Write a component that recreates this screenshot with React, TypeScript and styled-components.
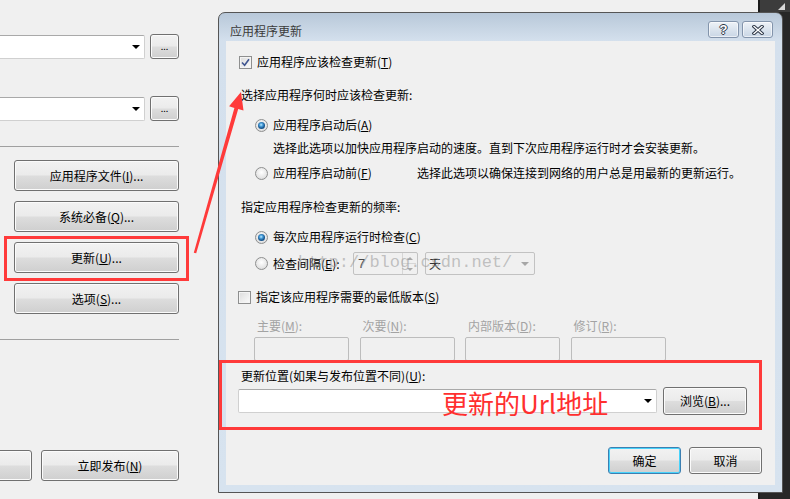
import React from 'react';
import styled, { createGlobalStyle } from 'styled-components';

const GlobalStyle = createGlobalStyle`
  html, body {
    margin: 0;
    padding: 0;
    background: #f0f0f0;
  }
  body {
    font-family: 'Noto Sans CJK SC', 'Noto Sans', 'Liberation Sans', sans-serif;
    font-size: 12px;
    color: #000;
  }
`;

const Screen = styled.div`
  position: relative;
  width: 790px;
  height: 499px;
  display: flex;
  overflow: hidden;
  background: #f0f0f0;
`;

// main window behind the dialog
const MainWindow = styled.div`
  width: 758px;
  flex: none;
  padding-top: 34px;
  box-sizing: border-box;
`;

const SideColumn = styled.div`
  width: 179px;
  display: flex;
  flex-direction: column;
`;

const PathRow = styled.div<{ $top: number }>`
  display: flex;
  align-items: center;
  gap: 5px;
  height: 25px;
  margin-top: ${(p) => p.$top}px;
`;

const Combo = styled.div<{ $w: number; $h?: number; $shift?: number }>`
  width: ${(p) => p.$w}px;
  height: ${(p) => p.$h ?? 24}px;
  margin-left: ${(p) => p.$shift ?? 0}px;
  box-sizing: border-box;
  background: #fff;
  border: 1px solid #d0d0d0;
  border-top-color: #a9a9a9;
  border-radius: 2px;
  display: flex;
  align-items: center;
  justify-content: flex-end;
  padding-right: 4px;
  flex: none;
`;

const DropArrow = styled.span<{ $disabled?: boolean }>`
  width: 0;
  height: 0;
  border-left: 4px solid transparent;
  border-right: 4px solid transparent;
  border-top: 4px solid ${(p) => (p.$disabled ? '#a6a6a6' : '#000')};
`;

const WinButton = styled.div<{ $w: number; $h: number; $default?: boolean }>`
  width: ${(p) => p.$w}px;
  height: ${(p) => p.$h}px;
  flex: none;
  box-sizing: border-box;
  border: 1px solid ${(p) => (p.$default ? '#3c7fb1' : '#707070')};
  border-radius: 3px;
  background: linear-gradient(#f2f2f2 0%, #ebebeb 48%, #dddddd 52%, #cfcfcf 100%);
  box-shadow: inset 0 0 0 1px ${(p) => (p.$default ? '#48d3fb' : '#fbfbfb')};
  display: flex;
  align-items: center;
  justify-content: center;
  font-size: 12px;
  line-height: 16px;
  color: #000;
  white-space: nowrap;
`;

const Dots = styled(WinButton)`
  font-size: 9px;
  letter-spacing: 0;
  padding-top: 1px;
`;

const SideButton = styled(WinButton)<{ $top: number }>`
  margin-left: 14px;
  margin-top: ${(p) => p.$top}px;
`;

const Separator = styled.div<{ $top: number }>`
  height: 1px;
  background: #a0a0a0;
  margin-top: ${(p) => p.$top}px;
`;

const BottomRow = styled.div`
  display: flex;
  gap: 9px;
  margin-top: 110px;
  margin-left: -10px;
`;

const DarkStrip = styled.div`
  flex: 1;
  background: #272727;
  border-left: 2px solid #1b1b1b;
`;

const StripCap = styled.div`
  height: 12px;
  background: #3c3c3c;
  display: flex;
  justify-content: flex-end;
  padding: 3px 5px 0 0;
  box-sizing: border-box;
`;

const Grip = styled.span`
  width: 0;
  height: 0;
  border-left: 7px solid transparent;
  border-bottom: 7px solid #d8d8d8;
`;

// dialog
const Dialog = styled.div`
  position: absolute;
  left: 218px;
  top: 12px;
  width: 565px;
  height: 481px;
  box-sizing: border-box;
  border: 1px solid #555;
  border-radius: 7px 7px 0 0;
  background: linear-gradient(#b8c8d9 0px, #d4e0ed 28px, #d7e3ef 100%);
  display: flex;
  flex-direction: column;
`;

const TitleBar = styled.div`
  height: 28px;
  flex: none;
  display: flex;
  align-items: flex-start;
  padding: 8px 9px 0 11px;
  box-sizing: border-box;
`;

const Title = styled.div`
  flex: 1;
  margin-top: 2px;
  line-height: 16px;
  color: #3b3b3b;
`;

const CaptionButtons = styled.div`
  display: flex;
  gap: 3px;
`;

const CaptionButton = styled.div`
  width: 31px;
  height: 17px;
  box-sizing: border-box;
  border: 1px solid #8394ab;
  border-radius: 3px;
  background: linear-gradient(#eef2f7 0%, #dbe4ee 50%, #c9d6e5 100%);
  box-shadow: inset 0 0 0 1px rgba(255, 255, 255, 0.6);
  display: flex;
  align-items: center;
  justify-content: center;
`;

const HelpGlyph = styled.span`
  font-family: 'Liberation Sans', sans-serif;
  font-weight: bold;
  font-size: 13px;
  line-height: 13px;
  color: #fff;
  text-shadow: 1px 0 #2c3646, -1px 0 #2c3646, 0 1px #2c3646, 0 -1px #2c3646;
`;

const Client = styled.div`
  flex: 1;
  margin: 0 7px 7px;
  background: #f0f0f0;
  display: flex;
  flex-direction: column;
  padding-top: 12px;
  box-sizing: border-box;
`;

const Line = styled.div<{ $top: number; $indent: number; $h?: number }>`
  display: flex;
  align-items: center;
  height: ${(p) => p.$h ?? 18}px;
  margin-top: ${(p) => p.$top}px;
  padding-left: ${(p) => p.$indent}px;
  white-space: nowrap;
  line-height: 16px;
`;

const Label = styled.span<{ $w?: number; $gap?: number }>`
  margin-left: ${(p) => p.$gap ?? 5}px;
  ${(p) => (p.$w ? `width: ${p.$w}px;` : '')}
  flex: none;
`;

const CheckBox = styled.span`
  width: 13px;
  height: 13px;
  box-sizing: border-box;
  border: 1px solid #8e8f8f;
  background: linear-gradient(135deg, #dcdcdc, #fbfbfb);
  box-shadow: inset 0 0 0 1px #f4f4f4;
  display: flex;
  align-items: center;
  justify-content: center;
  flex: none;
`;

const Radio = styled.span<{ $checked?: boolean }>`
  width: 13px;
  height: 13px;
  box-sizing: border-box;
  border-radius: 50%;
  border: 1px solid #8e8f8f;
  background: radial-gradient(circle at 50% 40%, #ffffff 0, #e6e6e6 60%, #cfcfcf 100%);
  display: flex;
  align-items: center;
  justify-content: center;
  flex: none;
  &::after {
    content: '';
    display: ${(p) => (p.$checked ? 'block' : 'none')};
    width: 7px;
    height: 7px;
    border-radius: 50%;
    background: radial-gradient(circle at 45% 40%, #c4ecff 0, #4aa0dc 1.6px, #17548c 3.5px);
  }
`;

const Hint = styled.span``;

const NumberBox = styled.div`
  width: 65px;
  height: 23px;
  box-sizing: border-box;
  border: 1px solid #c2c2c2;
  border-radius: 2px;
  display: flex;
  align-items: center;
  padding-left: 4px;
  color: #4a4a4a;
  font-family: 'Liberation Sans', sans-serif;
  font-size: 13px;
`;

const NumberText = styled.span`
  flex: 1;
`;

const Spinner = styled.div`
  width: 13px;
  height: 21px;
  margin-right: 1px;
  display: flex;
  flex-direction: column;
  border-left: 1px solid #d6d6d6;
`;

const SpinHalf = styled.div<{ $up?: boolean }>`
  flex: 1;
  display: flex;
  align-items: center;
  justify-content: center;
  border-bottom: ${(p) => (p.$up ? '1px solid #d6d6d6' : 'none')};
  &::after {
    content: '';
    width: 0;
    height: 0;
    border-left: 3px solid transparent;
    border-right: 3px solid transparent;
    ${(p) => (p.$up ? 'border-bottom' : 'border-top')}: 3px solid #a8a8a8;
  }
`;

const DisabledCombo = styled.div`
  width: 110px;
  height: 23px;
  margin-left: 7px;
  box-sizing: border-box;
  border: 1px solid #c2c2c2;
  border-radius: 2px;
  display: flex;
  align-items: center;
  padding: 0 5px 0 3px;
  color: #333;
`;

const ComboText = styled.span`
  flex: 1;
`;

const VersionGrid = styled.div`
  display: grid;
  grid-template-columns: repeat(4, 95px);
  grid-template-rows: 18px 24px;
  column-gap: 10.5px;
  row-gap: 2px;
  margin-top: 11px;
  padding-left: 28px;
`;

const VersionLabel = styled.div`
  padding-left: 3px;
  color: #a3a3a3;
  line-height: 18px;
  white-space: nowrap;
`;

const VersionBox = styled.div`
  box-sizing: border-box;
  border: 1px solid #bdbdbd;
  border-radius: 2px;
`;

const ButtonRow = styled.div`
  display: flex;
  justify-content: flex-end;
  gap: 8px;
  margin-top: 32px;
  padding-right: 13px;
`;

// annotations drawn over the screenshot
const RedFrame = styled.div<{ $x: number; $y: number; $w: number; $h: number }>`
  position: absolute;
  left: ${(p) => p.$x}px;
  top: ${(p) => p.$y}px;
  width: ${(p) => p.$w}px;
  height: ${(p) => p.$h}px;
  box-sizing: border-box;
  border: 3px solid #ff3a3a;
  pointer-events: none;
`;

const RedNote = styled.div`
  position: absolute;
  left: 223px;
  top: 377px;
  font-size: 26px;
  line-height: 26px;
  color: #ff2f2f;
  white-space: nowrap;
`;

const Watermark = styled.div`
  position: absolute;
  left: 79px;
  top: 240px;
  font-family: 'Liberation Mono', monospace;
  font-size: 17px;
  line-height: 20px;
  color: rgba(150, 150, 150, 0.55);
  white-space: nowrap;
  pointer-events: none;
`;

const ArrowLayer = styled.svg`
  position: absolute;
  left: 0;
  top: 0;
  pointer-events: none;
`;

const CheckMark = () => (
  <svg width="9" height="9" viewBox="0 0 9 9">
    <path d="M1 4.5 L3.6 7.2 L8 1.2" fill="none" stroke="#3f5590" strokeWidth="1.6" />
  </svg>
);

const CloseGlyph = () => (
  <svg width="12" height="10" viewBox="0 0 12 10">
    <path d="M2 1.5 L10 8.5 M10 1.5 L2 8.5" stroke="#2c3646" strokeWidth="3.4" strokeLinecap="square" />
    <path d="M2 1.5 L10 8.5 M10 1.5 L2 8.5" stroke="#fff" strokeWidth="1.4" strokeLinecap="square" />
  </svg>
);

export default function App() {
  return (
    <>
      <GlobalStyle />
      <Screen>
        <MainWindow>
          <SideColumn>
            <PathRow $top={0}>
              <Combo $w={151} $shift={-6}>
                <DropArrow />
              </Combo>
              <Dots $w={29} $h={25}>...</Dots>
            </PathRow>
            <PathRow $top={37}>
              <Combo $w={151} $shift={-6}>
                <DropArrow />
              </Combo>
              <Dots $w={29} $h={25}>...</Dots>
            </PathRow>
            <Separator $top={25} />
            <SideButton $w={165} $h={31} $top={13}>
              应用程序文件(<u>I</u>)...
            </SideButton>
            <SideButton $w={165} $h={31} $top={10}>
              系统必备(<u>Q</u>)...
            </SideButton>
            <SideButton $w={165} $h={31} $top={10}>
              更新(<u>U</u>)...
            </SideButton>
            <SideButton $w={165} $h={31} $top={10}>
              选项(<u>S</u>)...
            </SideButton>
            <Separator $top={25} />
            <BottomRow>
              <WinButton $w={42} $h={31} />
              <WinButton $w={138} $h={31}>
                立即发布(<u>N</u>)
              </WinButton>
            </BottomRow>
          </SideColumn>
        </MainWindow>
        <DarkStrip>
          <StripCap>
            <Grip />
          </StripCap>
        </DarkStrip>

        <RedFrame $x={4} $y={236} $w={185} $h={45} />

        <Dialog>
          <TitleBar>
            <Title>应用程序更新</Title>
            <CaptionButtons>
              <CaptionButton>
                <HelpGlyph>?</HelpGlyph>
              </CaptionButton>
              <CaptionButton>
                <CloseGlyph />
              </CaptionButton>
            </CaptionButtons>
          </TitleBar>
          <Client>
            <Line $top={0} $indent={13}>
              <CheckBox>
                <CheckMark />
              </CheckBox>
              <Label>
                应用程序应该检查更新(<u>T</u>)
              </Label>
            </Line>
            <Line $top={15} $indent={15}>
              选择应用程序何时应该检查更新:
            </Line>
            <Line $top={12} $indent={29}>
              <Radio $checked />
              <Label>
                应用程序启动后(<u>A</u>)
              </Label>
            </Line>
            <Line $top={5} $indent={47}>
              <Hint>选择此选项以加快应用程序启动的速度。直到下次应用程序运行时才会安装更新。</Hint>
            </Line>
            <Line $top={7} $indent={29}>
              <Radio />
              <Label $w={144}>
                应用程序启动前(<u>F</u>)
              </Label>
              <Hint>选择此选项以确保连接到网络的用户总是用最新的更新运行。</Hint>
            </Line>
            <Line $top={16} $indent={15}>
              指定应用程序检查更新的频率:
            </Line>
            <Line $top={12} $indent={29}>
              <Radio $checked />
              <Label>
                每次应用程序运行时检查(<u>C</u>)
              </Label>
            </Line>
            <Line $top={6} $indent={29} $h={23}>
              <Radio />
              <Label $w={80}>
                检查间隔(<u>E</u>):
              </Label>
              <NumberBox>
                <NumberText>7</NumberText>
                <Spinner>
                  <SpinHalf $up />
                  <SpinHalf />
                </Spinner>
              </NumberBox>
              <DisabledCombo>
                <ComboText>天</ComboText>
                <DropArrow $disabled />
              </DisabledCombo>
            </Line>
            <Line $top={13} $indent={12}>
              <CheckBox />
              <Label>
                指定该应用程序需要的最低版本(<u>S</u>)
              </Label>
            </Line>
            <VersionGrid>
              <VersionLabel>
                主要(<u>M</u>):
              </VersionLabel>
              <VersionLabel>
                次要(<u>N</u>):
              </VersionLabel>
              <VersionLabel>
                内部版本(<u>D</u>):
              </VersionLabel>
              <VersionLabel>
                修订(<u>R</u>):
              </VersionLabel>
              <VersionBox />
              <VersionBox />
              <VersionBox />
              <VersionBox />
            </VersionGrid>
            <Line $top={6} $indent={15}>
              更新位置(如果与发布位置不同)(<u>U</u>):
            </Line>
            <Line $top={2} $indent={12} $h={28}>
              <Combo $w={419}>
                <DropArrow />
              </Combo>
              <WinButton $w={84} $h={28} style={{ marginLeft: 6 }}>
                浏览(<u>B</u>)...
              </WinButton>
            </Line>
            <ButtonRow>
              <WinButton $w={73} $h={27} $default>
                确定
              </WinButton>
              <WinButton $w={73} $h={27}>
                取消
              </WinButton>
            </ButtonRow>
          </Client>

          <Watermark>http://blog.csdn.net/</Watermark>
          <RedFrame $x={0} $y={347} $w={543} $h={70} />
          <RedNote>更新的Url地址</RedNote>
        </Dialog>

        <ArrowLayer width="790" height="499" viewBox="0 0 790 499">
          <polygon
            points="193.8,252.7 234.4,107.9 229.1,106.3 241,92 243.5,110.4 238.2,109 196.2,253.3"
            fill="#ff3a3a"
          />
        </ArrowLayer>
      </Screen>
    </>
  );
}
